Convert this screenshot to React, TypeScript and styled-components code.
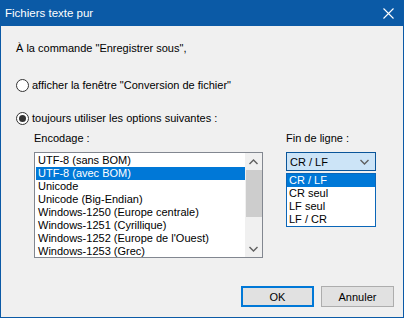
import styled, { createGlobalStyle } from "styled-components";

const Global = createGlobalStyle`
    body {
        margin: 0;
        background: #f0f0f0;
        font-family: "Liberation Sans", Arial, sans-serif;
        font-size: 11px;
        color: #000;
    }
`;

const Window = styled.div`
    width: 404px;
    height: 318px;
    box-sizing: border-box;
    border: 1px solid #0b5aa6;
    border-top: none;
    background: #f0f0f0;
    display: flex;
    flex-direction: column;
`;

const TitleBar = styled.div`
    height: 26px;
    margin: 0 -1px;
    background: #0b5aa6;
    color: white;
    display: flex;
    align-items: center;
    justify-content: space-between;
    padding: 0 10px 0 5px;
`;

const Title = styled.span`
    font-size: 11.5px;
`;

const Content = styled.div`
    flex: 1;
    display: flex;
    flex-direction: column;
    padding: 0 9px 10px 15px;
`;

const Line = styled.div<{ $top: number }>`
    margin-top: ${(p) => p.$top}px;
    line-height: 13px;
    height: 13px;
`;

const RadioRow = styled.label<{ $top: number }>`
    margin-top: ${(p) => p.$top}px;
    display: flex;
    align-items: center;
    gap: 3px;
    height: 14px;
`;

const Radio = styled.span<{ $checked?: boolean }>`
    width: 13px;
    height: 13px;
    box-sizing: border-box;
    border: 1px solid #333;
    border-radius: 50%;
    background: #fff;
    display: flex;
    align-items: center;
    justify-content: center;
    &::after {
        content: "";
        width: 7px;
        height: 7px;
        border-radius: 50%;
        background: ${(p) => (p.$checked ? "#333" : "transparent")};
    }
`;

const Options = styled.div`
    margin-top: 7px;
    padding-left: 18px;
    display: flex;
    gap: 23px;
`;

const Column = styled.div`
    display: flex;
    flex-direction: column;
    gap: 7px;
    position: relative;
`;

const FieldLabel = styled.div`
    line-height: 13px;
`;

const ListBox = styled.div`
    width: 229px;
    height: 106px;
    box-sizing: border-box;
    border: 1px solid #828790;
    background: #fff;
    display: flex;
    padding: 1px 0 0 1px;
`;

const Items = styled.div`
    flex: 1;
    display: flex;
    flex-direction: column;
`;

const Item = styled.div<{ $selected?: boolean }>`
    height: 13px;
    line-height: 13px;
    padding-left: 2px;
    white-space: nowrap;
    background: ${(p) => (p.$selected ? "#0078d7" : "transparent")};
    color: ${(p) => (p.$selected ? "#fff" : "#000")};
`;

const ScrollBar = styled.div`
    width: 17px;
    background: #f0f0f0;
    display: flex;
    flex-direction: column;
    align-items: stretch;
    margin-top: -1px;
`;

const Arrow = styled.div`
    height: 17px;
    display: flex;
    align-items: center;
    justify-content: center;
`;

const Track = styled.div`
    flex: 1;
    display: flex;
    flex-direction: column;
    padding-left: 1px;
`;

const Thumb = styled.div`
    height: 47px;
    background: #cdcdcd;
`;

const Combo = styled.div`
    width: 90px;
    height: 19px;
    box-sizing: border-box;
    border: 1px solid #0a5599;
    background: #cce4f7;
    display: flex;
    align-items: center;
    justify-content: space-between;
    padding: 0 6px 0 3px;
`;

const DropList = styled.div`
    position: absolute;
    left: 0;
    top: 41px;
    width: 90px;
    box-sizing: border-box;
    border: 1px solid #0a66b8;
    background: #fff;
    display: flex;
    flex-direction: column;
`;

const DropItem = styled.div<{ $selected?: boolean }>`
    height: 13px;
    line-height: 13px;
    padding-left: 2px;
    background: ${(p) => (p.$selected ? "#0078d7" : "transparent")};
    color: ${(p) => (p.$selected ? "#fff" : "#000")};
`;

const Footer = styled.div`
    margin-top: auto;
    display: flex;
    justify-content: flex-end;
    gap: 7px;
`;

const Button = styled.button<{ $default?: boolean }>`
    width: 73px;
    height: 21px;
    box-sizing: border-box;
    font: inherit;
    color: #000;
    background: #e1e1e1;
    border: ${(p) => (p.$default ? "2px solid #0078d7" : "1px solid #adadad")};
    padding: 0;
`;

const Chevron = ({ up }: { up?: boolean }) => (
    <svg width="9" height="6" viewBox="0 0 9 6">
        <path
            d={up ? "M0.5 5 L4.5 1 L8.5 5" : "M0.5 1 L4.5 5 L8.5 1"}
            fill="none"
            stroke="#606060"
            strokeWidth="1.4"
        />
    </svg>
);

const encodings = [
    "UTF-8 (sans BOM)",
    "UTF-8 (avec BOM)",
    "Unicode",
    "Unicode (Big-Endian)",
    "Windows-1250 (Europe centrale)",
    "Windows-1251 (Cyrillique)",
    "Windows-1252 (Europe de l'Ouest)",
    "Windows-1253 (Grec)",
];

const endings = ["CR / LF", "CR seul", "LF seul", "LF / CR"];

const App = () => {
    return (
        <Window>
            <Global />
            <TitleBar>
                <Title>Fichiers texte pur</Title>
                <svg width="11" height="11" viewBox="0 0 11 11">
                    <path d="M0.5 0.5 L10.5 10.5 M10.5 0.5 L0.5 10.5" stroke="#fff" strokeWidth="1.1" />
                </svg>
            </TitleBar>
            <Content>
                <Line $top={16}>À la commande "Enregistrer sous",</Line>
                <RadioRow $top={23}>
                    <Radio />
                    afficher la fenêtre "Conversion de fichier"
                </RadioRow>
                <RadioRow $top={19}>
                    <Radio $checked />
                    toujours utiliser les options suivantes :
                </RadioRow>
                <Options>
                    <Column>
                        <FieldLabel>Encodage :</FieldLabel>
                        <ListBox>
                            <Items>
                                {encodings.map((e, i) => (
                                    <Item key={e} $selected={i === 1}>
                                        {e}
                                    </Item>
                                ))}
                            </Items>
                            <ScrollBar>
                                <Arrow>
                                    <Chevron up />
                                </Arrow>
                                <Track>
                                    <Thumb />
                                </Track>
                                <Arrow>
                                    <Chevron />
                                </Arrow>
                            </ScrollBar>
                        </ListBox>
                    </Column>
                    <Column>
                        <FieldLabel>Fin de ligne :</FieldLabel>
                        <Combo>
                            CR / LF
                            <Chevron />
                        </Combo>
                        <DropList>
                            {endings.map((e, i) => (
                                <DropItem key={e} $selected={i === 0}>
                                    {e}
                                </DropItem>
                            ))}
                        </DropList>
                    </Column>
                </Options>
                <Footer>
                    <Button $default>OK</Button>
                    <Button>Annuler</Button>
                </Footer>
            </Content>
        </Window>
    );
};

export default App;
